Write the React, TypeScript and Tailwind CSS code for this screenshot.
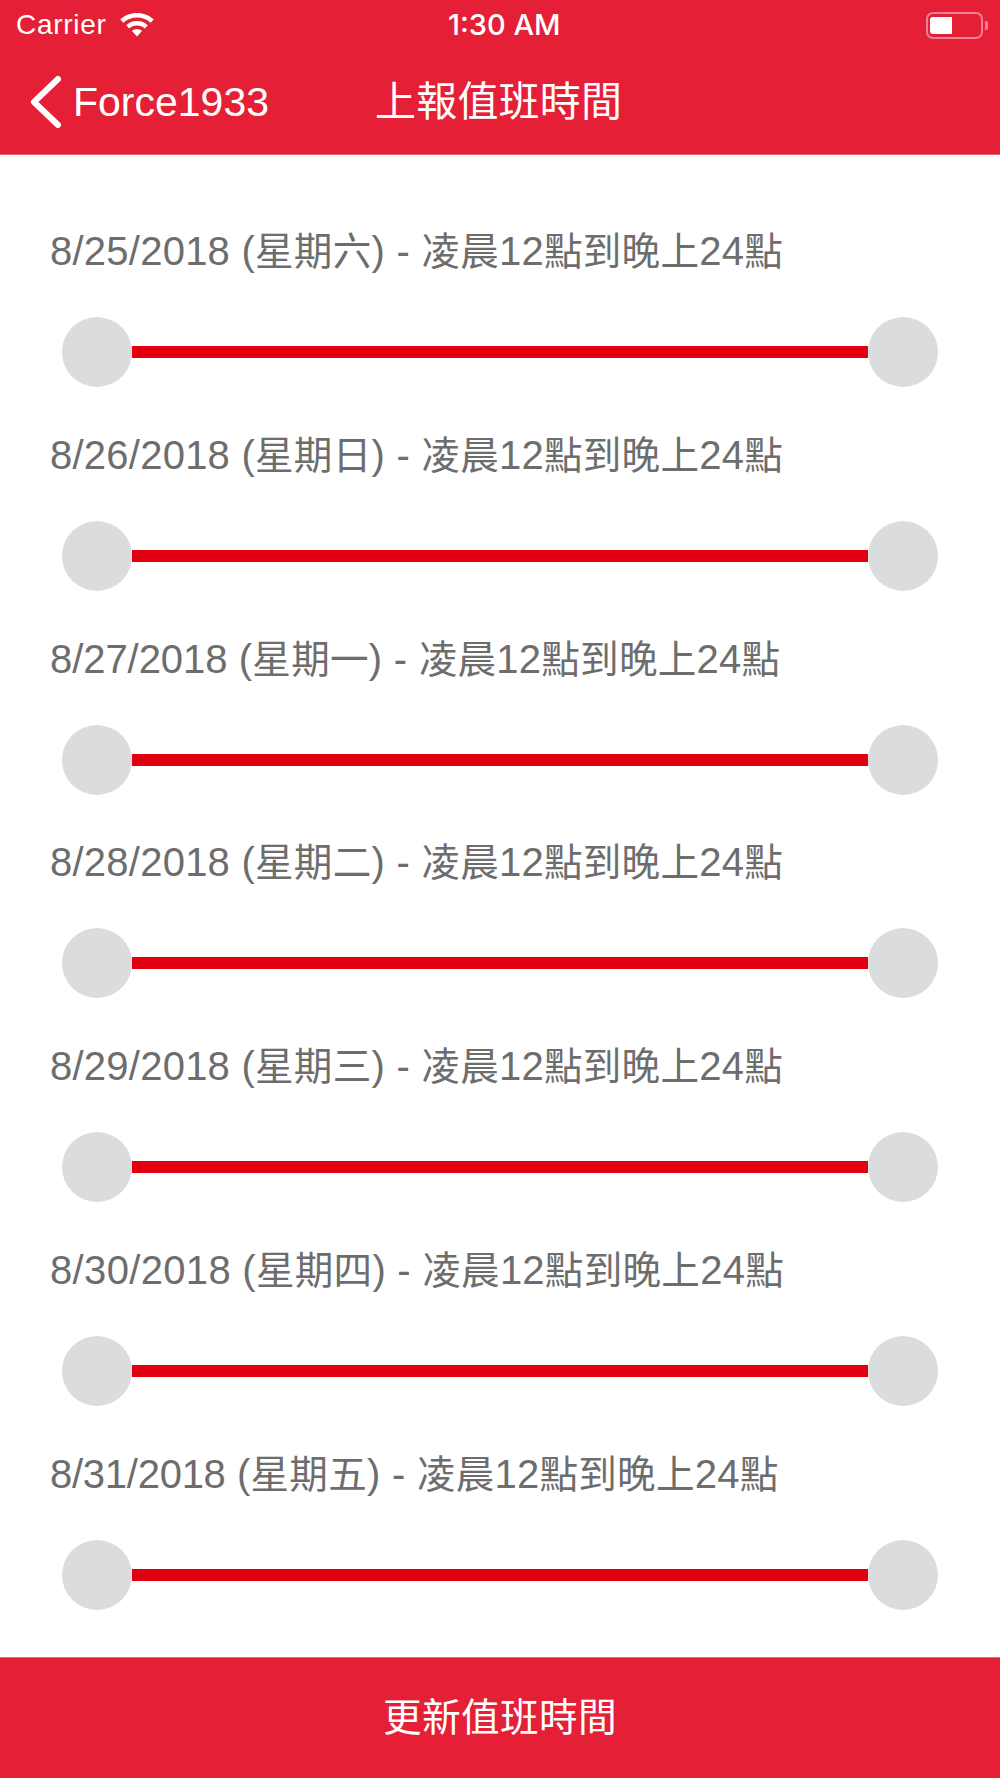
const weekdays: [string, string, string][] = [
  ["8/25/2018", "星期六", "0.240px"],
  ["8/26/2018", "星期日", "0.240px"],
  ["8/27/2018", "星期一", "-0.060px"],
  ["8/28/2018", "星期二", "0.240px"],
  ["8/29/2018", "星期三", "0.240px"],
  ["8/30/2018", "星期四", "0.340px"],
  ["8/31/2018", "星期五", "-0.260px"],
];

const font = "font-['Liberation_Sans','Noto_Sans_CJK_TC',sans-serif]";

function Cjk({ children }: { children: string }) {
  return <span className="text-[38.600px]">{children}</span>;
}

function Wifi() {
  return (
    <svg width="34" height="24" viewBox="0 0 34 24" fill="#fff">
      <path d="M17 0C10.500 0 4.700 2.400 0.300 6.400L3.300 9.700C6.900 6.400 11.700 4.400 17 4.400C22.300 4.400 27.100 6.400 30.700 9.700L33.700 6.400C29.300 2.400 23.500 0 17 0Z" />
      <path d="M17 8C12.800 8 9 9.600 6.200 12.200L9.200 15.400C11.200 13.600 14 12.400 17 12.400C20 12.400 22.800 13.600 24.800 15.400L27.800 12.200C25 9.600 21.200 8 17 8Z" />
      <path d="M17 16C15 16 13.300 16.700 12 17.900L17 23.500L22 17.900C20.700 16.700 19 16 17 16Z" />
    </svg>
  );
}

function Battery() {
  return (
    <div className="flex items-center">
      <div className="w-[57px] h-[27px] rounded-[7px] border-2 border-[#f2828f] pl-[2px] py-[3px]">
        <div className="w-[22px] h-[17px] bg-white rounded-l-[3px]" />
      </div>
      <div className="w-[3px] h-[9px] bg-[#f2828f] rounded-r-[2px] ml-[2px]" />
    </div>
  );
}

function Slider() {
  return (
    <div className="flex items-center px-[62px] mt-[42px] h-[70px]">
      <div className="w-[70px] h-[70px] rounded-full bg-[#dbdcde] shrink-0" />
      <div className="flex-1 h-[12px] bg-[#e0000f]" />
      <div className="w-[70px] h-[70px] rounded-full bg-[#dbdcde] shrink-0" />
    </div>
  );
}

export default function App() {
  return (
    <div className={`${font} w-[1000px] h-[1778px] bg-white flex flex-col overflow-hidden`}>
      <header className="h-[155px] bg-[#e51f36] text-white shrink-0 flex flex-col border-b border-[#ea6676]">
        <div className="relative h-[50px] flex items-center justify-between pl-[16px] pr-[12px]">
          <div className="flex items-center gap-[14px]">
            <span className="text-[28px] leading-[50px] tracking-[0.7px]">Carrier</span>
            <Wifi />
          </div>
          <span className="absolute left-[448px] font-['Inter',sans-serif] text-[29px] font-medium leading-[50px]">1:30 AM</span>
          <Battery />
        </div>
        <div className="flex-1 flex items-center pl-[28px]">
          <svg width="34" height="54" viewBox="0 0 34 54" fill="none" stroke="#fff" strokeWidth="6" strokeLinecap="round" strokeLinejoin="round">
            <path d="M30 4L6 27L30 50" />
          </svg>
          <span className="ml-[11px] text-[41px] leading-none w-[302px]">Force1933</span>
          <span className="text-[41px] leading-none tracking-[0.2px]">上報值班時間</span>
        </div>
      </header>
      <main className="flex-1 flex flex-col pt-[70px]">
        {weekdays.map(([date, week, track], i) => (
          <div key={date} className={i === 0 ? "" : "mt-[41.750px]"}>
            <div className="pl-[50px] text-[40px] leading-[52px] tracking-[0.24px] text-[#6d6d6d] h-[50px] whitespace-nowrap">
              <span style={{ letterSpacing: track }}>{date}</span>
              {" ("}
              <Cjk>{week}</Cjk>
              {") - "}
              <Cjk>凌晨</Cjk>
              12
              <Cjk>點到晚上</Cjk>
              24
              <Cjk>點</Cjk>
            </div>
            <Slider />
          </div>
        ))}
      </main>
      <button className="h-[121px] bg-[#e51f36] text-white text-[38.700px] tracking-[0.3px] shrink-0 flex items-center justify-center border-t border-[#ea6676]">
        更新值班時間
      </button>
    </div>
  );
}
